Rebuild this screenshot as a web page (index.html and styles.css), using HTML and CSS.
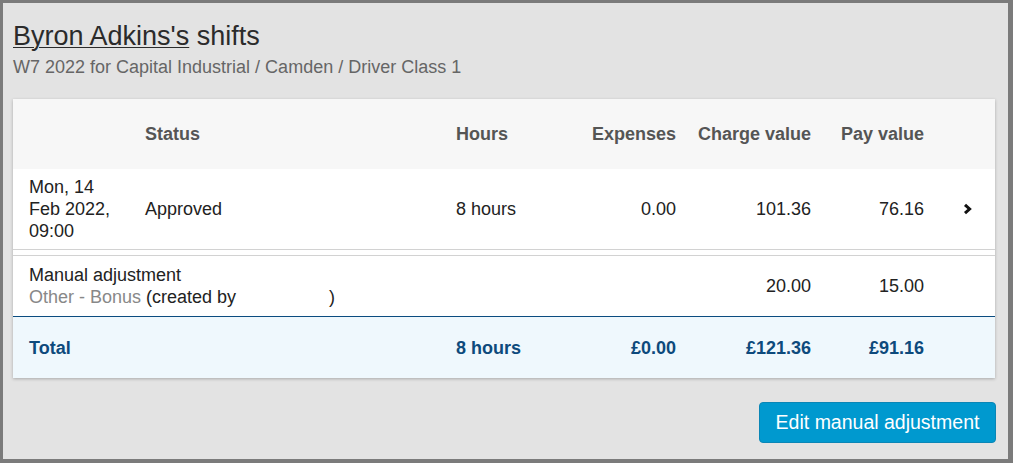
FILE: index.html
```html
<!DOCTYPE html>
<html>
<head>
<meta charset="utf-8">
<link rel="stylesheet" href="styles.css">
</head>
<body>
<div class="frame">
  <h1 class="title"><a class="name" href="#">Byron Adkins's</a> shifts</h1>
  <p class="subtitle">W7 2022 for Capital Industrial / Camden / Driver Class 1</p>
  <div class="card">
    <div class="row head">
      <div class="c"></div>
      <div class="c">Status</div>
      <div class="c">Hours</div>
      <div class="c r">Expenses</div>
      <div class="c r">Charge value</div>
      <div class="c r">Pay value</div>
      <div class="c"></div>
    </div>
    <div class="row shift">
      <div class="c date">Mon, 14 Feb 2022, 09:00</div>
      <div class="c">Approved</div>
      <div class="c">8 hours</div>
      <div class="c r">0.00</div>
      <div class="c r">101.36</div>
      <div class="c r">76.16</div>
      <div class="c chev"><svg width="9" height="12" viewBox="0 0 9 12"><polyline points="2,1.8 6.6,6 2,10.2" fill="none" stroke="#111" stroke-width="3" stroke-linejoin="miter"/></svg></div>
    </div>
    <div class="spacer"></div>
    <div class="row adj">
      <div class="c wide">Manual adjustment<br><span class="muted">Other - Bonus</span> (created by <span class="redact"></span>)</div>
      <div class="c r">20.00</div>
      <div class="c r">15.00</div>
      <div class="c"></div>
    </div>
    <div class="row total">
      <div class="c">Total</div>
      <div class="c"></div>
      <div class="c">8 hours</div>
      <div class="c r">£0.00</div>
      <div class="c r">£121.36</div>
      <div class="c r">£91.16</div>
      <div class="c"></div>
    </div>
  </div>
  <div class="actions">
    <button class="btn">Edit manual adjustment</button>
  </div>
</div>
</body>
</html>
```

FILE: styles.css
```css
html, body {
  margin: 0;
  padding: 0;
}
body {
  font-family: "Liberation Sans", Arial, sans-serif;
  color: #222;
  width: 1013px;
  height: 463px;
  overflow: hidden;
}
.frame {
  box-sizing: border-box;
  width: 1013px;
  height: 463px;
  border-style: solid;
  border-color: #7b7b7b;
  border-width: 3px 5px 4px 3px;
  background: #e3e3e3;
  padding: 18px 13px 0 10px;
}
.title {
  margin: 0;
  font-size: 27px;
  font-weight: normal;
  line-height: 30px;
  color: #2b2b2b;
}
.name {
  color: #2b2b2b;
  text-decoration: underline;
  text-underline-offset: 2px;
  text-decoration-thickness: 1px;
}
.subtitle {
  margin: 5px 0 0 0;
  font-size: 18px;
  line-height: 22px;
  color: #666;
}
.card {
  margin-top: 21px;
  background: #fff;
  box-shadow: 0 1px 3px rgba(0, 0, 0, 0.25);
}
.row {
  display: grid;
  grid-template-columns: 116px 311px 120px 132px 135px 113px 55px;
  align-items: center;
  font-size: 18px;
  line-height: 22px;
}
.c {
  padding: 0 16px;
  min-width: 0;
}
.r {
  text-align: right;
  padding-left: 0;
  white-space: nowrap;
}
.head {
  height: 70px;
  background: #f7f7f7;
  font-weight: bold;
  color: #555;
}
.shift {
  height: 80px;
  border-bottom: 1px solid #d2d2d2;
}
.chev {
  display: flex;
  justify-content: center;
  padding: 0;
  padding-right: 1px;
}
.chev svg {
  display: block;
}
.spacer {
  height: 5px;
}
.adj {
  height: 60px;
  border-top: 1px solid #d2d2d2;
  border-bottom: 1px solid #0b4c80;
  grid-template-columns: 679px 135px 113px 55px;
}
.muted {
  color: #888;
}
.redact {
  display: inline-block;
  width: 88px;
}
.total {
  height: 61px;
  background: #eff8fd;
  font-weight: bold;
  color: #0d4a7c;
}
.actions {
  display: flex;
  justify-content: flex-end;
  margin-top: 24px;
  margin-right: -1px;
}
.btn {
  font-family: "Liberation Sans", Arial, sans-serif;
  font-size: 19.5px;
  color: #fff;
  background: #0099cf;
  border: 1px solid #0a86b6;
  border-radius: 4px;
  height: 41px;
  width: 237px;
  padding: 0;
  cursor: pointer;
}
```
